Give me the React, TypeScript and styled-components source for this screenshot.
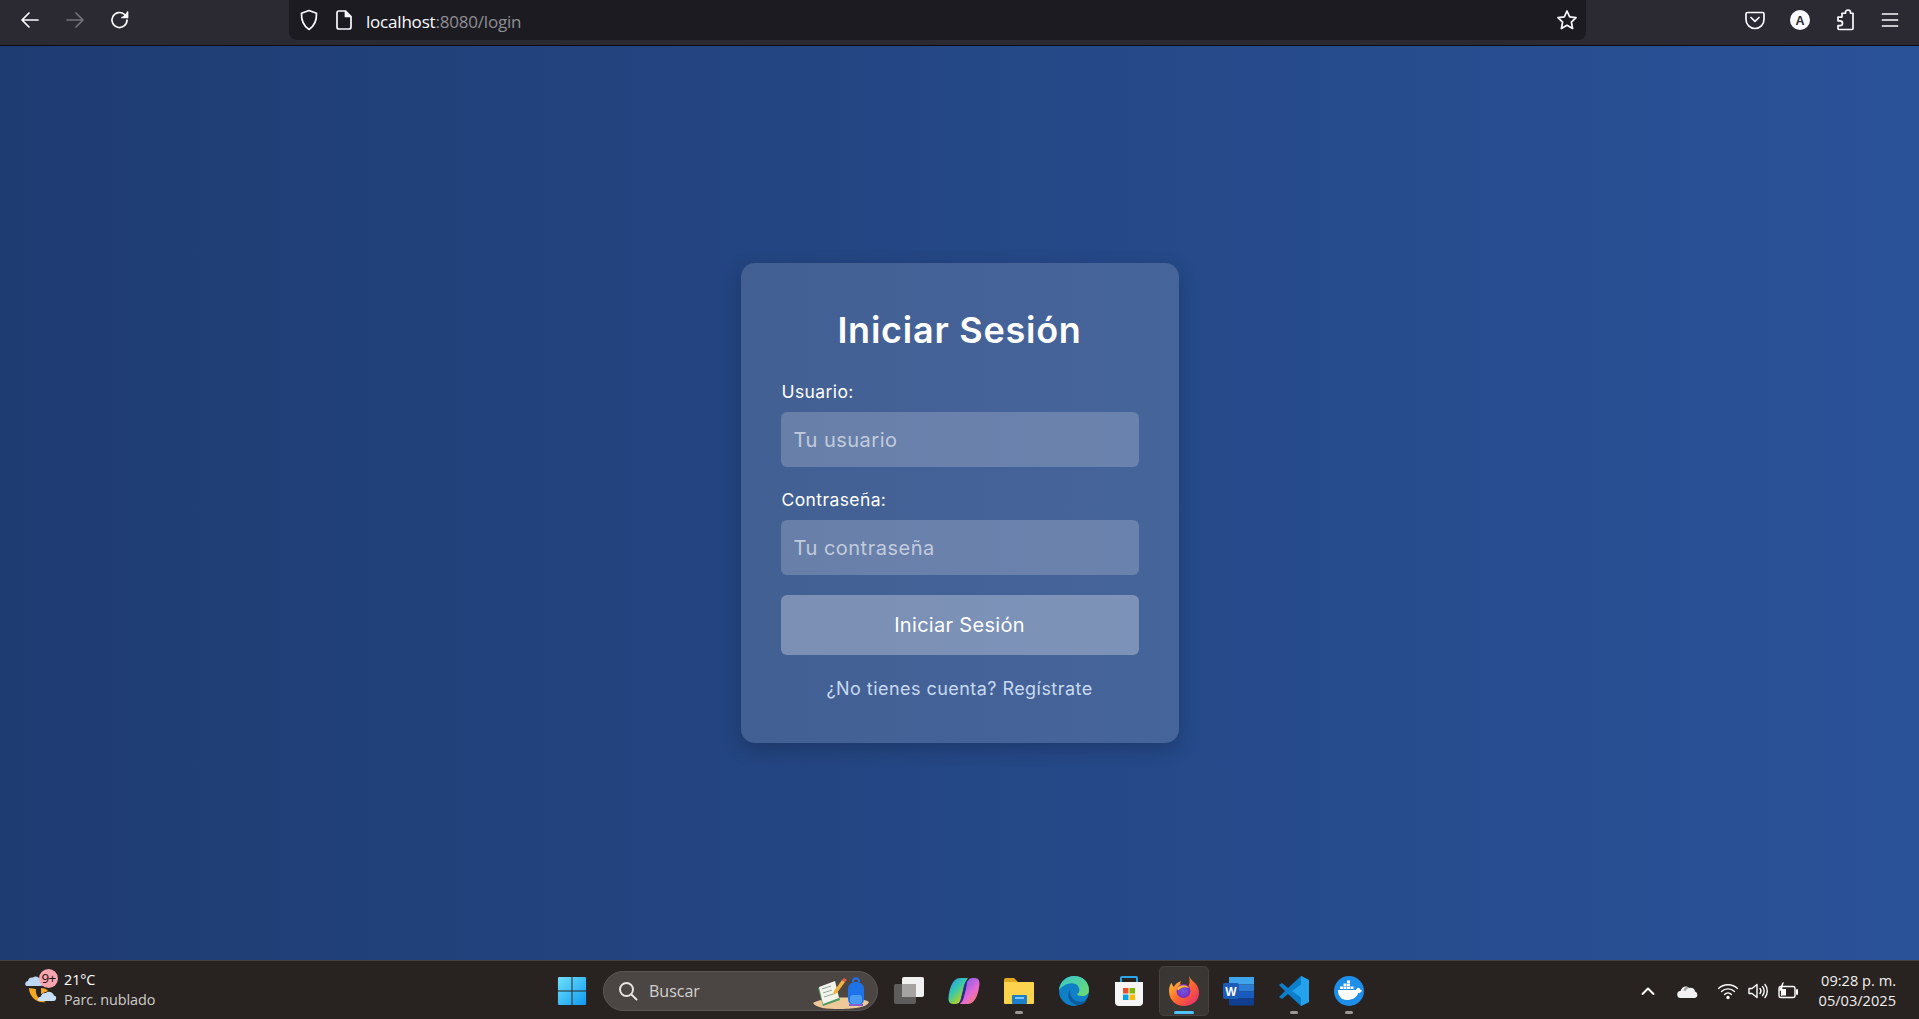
import { createGlobalStyle, styled } from "styled-components";

const GlobalStyle = createGlobalStyle`
  html, body { margin: 0; padding: 0; height: 100%; overflow: hidden; }
  #root { height: 100%; }
  * { box-sizing: border-box; }
`;

const uiFont = `"Open Sans", "Noto Sans", "Liberation Sans", sans-serif`;
const formFont = `Inter, "Noto Sans", "Liberation Sans", sans-serif`;

const Screen = styled.div`
  height: 1019px;
  display: flex;
  flex-direction: column;
`;

/* browser chrome */
const Toolbar = styled.header`
  height: 46px;
  flex: none;
  display: flex;
  align-items: flex-start;
  background: #2b2a33;
  border-bottom: 1px solid #0c0c0f;
  color: #fbfbfe;
`;

const NavGroup = styled.div`
  width: 289px;
  flex: none;
  display: flex;
  padding: 9px 0 0 19px;
  gap: 23px;
`;

const ToolIcon = styled.svg<{ $dim?: boolean }>`
  width: 22px;
  height: 22px;
  flex: none;
  fill: none;
  stroke: ${(p) => (p.$dim ? "#74737b" : "#fbfbfe")};
  stroke-width: 1.7;
  stroke-linecap: round;
  stroke-linejoin: round;
`;

const UrlBar = styled.div`
  width: 1297px;
  height: 40px;
  flex: none;
  display: flex;
  align-items: center;
  padding: 0 8px 0 9px;
  background: #1c1b22;
  border-radius: 0 0 8px 8px;
`;

const UrlGap = styled.span`
  width: 13px;
  flex: none;
`;

const UrlText = styled.div`
  flex: 1;
  margin-left: 11px;
  font: 17px ${uiFont};
  letter-spacing: -0.2px;
  color: #fbfbfe;
  padding-top: 2px;
`;

const UrlMuted = styled.span`
  color: #8f8f93;
`;

const ToolActions = styled.div`
  flex: 1;
  display: flex;
  padding: 9px 18px 0 0;
  justify-content: flex-end;
  gap: 23px;
`;

/* login page */
const Page = styled.main`
  flex: 1;
  display: flex;
  align-items: center;
  justify-content: center;
  background: linear-gradient(90deg, #1e3c72, #2a5298);
`;

const Card = styled.form`
  width: 438px;
  height: 480px;
  padding: 40px;
  display: flex;
  flex-direction: column;
  background: rgba(255, 255, 255, 0.15);
  border-radius: 14px;
  box-shadow: 0 6px 20px rgba(0, 0, 0, 0.2);
  font-family: ${formFont};
  color: #fff;
`;

const Title = styled.h1`
  margin: 0 0 24px;
  height: 52px;
  line-height: 55px;
  text-align: center;
  font-size: 36px;
  font-weight: 600;
  letter-spacing: 0.75px;
`;

const Label = styled.label`
  display: block;
  height: 33px;
  padding-left: 1px;
  line-height: 26px;
  font-size: 17.5px;
  letter-spacing: 0.4px;
`;

const TextInput = styled.input`
  display: block;
  width: 100%;
  height: 55px;
  margin-bottom: 20px;
  padding: 0 13px;
  border: none;
  border-radius: 6px;
  outline: none;
  background: rgba(255, 255, 255, 0.2);
  color: #fff;
  font: 20px ${formFont};
  letter-spacing: 0.5px;
  &::placeholder { color: rgba(255, 255, 255, 0.6); opacity: 1; }
`;

const Submit = styled.button`
  width: 100%;
  height: 60px;
  flex: none;
  border: none;
  border-radius: 6px;
  background: rgba(255, 255, 255, 0.3);
  color: #fff;
  font: 400 20px ${formFont};
  letter-spacing: 0.3px;
`;

const Footer = styled.p`
  margin: 21px 0 0;
  text-align: center;
  font-size: 18px;
  line-height: 26px;
  letter-spacing: 0.45px;
  color: #c7daf2;
`;

/* windows taskbar */
const Taskbar = styled.footer`
  height: 59px;
  flex: none;
  display: flex;
  align-items: center;
  padding-top: 1px;
  background: #282321;
  border-top: 1px solid #46423f;
  color: #fff;
  font-family: ${uiFont};
`;

const Weather = styled.div`
  width: 547px;
  flex: none;
  display: flex;
  align-items: center;
  padding-left: 25px;
  gap: 6px;
`;

const WeatherArt = styled.div`
  position: relative;
  width: 33px;
  height: 36px;
  flex: none;
`;

const Badge = styled.span`
  position: absolute;
  left: 14px;
  top: -4px;
  width: 19px;
  height: 19px;
  border-radius: 50%;
  background: #f8a5b0;
  color: #1b1010;
  font-size: 13.5px;
  line-height: 19px;
  text-align: center;
  letter-spacing: -0.8px;
`;

const WeatherText = styled.div`
  margin-top: -2px;
  font-size: 14.4px;
  line-height: 20px;
  letter-spacing: -0.1px;
`;

const WeatherSub = styled.div`
  color: #cfccca;
`;

const AppStrip = styled.div`
  display: flex;
  align-items: center;
  gap: 5px;
`;

const AppSlot = styled.div<{ $active?: boolean }>`
  position: relative;
  width: 50px;
  height: 50px;
  flex: none;
  display: flex;
  align-items: center;
  justify-content: center;
  border-radius: 5px;
  background: ${(p) => (p.$active ? "#3a3634" : "transparent")};
  border: 1px solid ${(p) => (p.$active ? "#444140" : "transparent")};
`;

const RunDot = styled.span<{ $active?: boolean }>`
  position: absolute;
  left: 50%;
  bottom: 1px;
  transform: translateX(-50%);
  width: ${(p) => (p.$active ? "20px" : "8px")};
  height: 3px;
  border-radius: 2px;
  background: ${(p) => (p.$active ? "#4fc3f7" : "#9c9897")};
`;

const SearchBox = styled.div`
  position: relative;
  width: 275px;
  height: 40px;
  flex: none;
  margin: 0 1px;
  display: flex;
  align-items: center;
  padding-left: 14px;
  gap: 11px;
  background: #4b4644;
  border: 1px solid #5c5856;
  border-radius: 20px;
  font-size: 16px;
  color: #d4d1cf;
`;

const SearchArt = styled.svg`
  position: absolute;
  right: 7px;
  top: 4px;
  width: 58px;
  height: 34px;
`;

const Tray = styled.div`
  flex: 1;
  display: flex;
  align-items: center;
  justify-content: flex-end;
  padding-right: 23px;
`;

const TrayIcons = styled.div`
  display: flex;
  align-items: center;
  gap: 10px;
  margin-right: 20px;
`;

const Clock = styled.div`
  margin-top: -2px;
  text-align: right;
  font-size: 14.6px;
  line-height: 20px;
  color: #f2f0ef;
`;

const AppIcon = styled.svg`
  width: 32px;
  height: 32px;
  display: block;
`;

const TrayIcon = styled.svg`
  width: 22px;
  height: 22px;
  flex: none;
  fill: none;
  stroke: #fff;
  stroke-width: 1.4;
  stroke-linecap: round;
  stroke-linejoin: round;
`;

const Back = () => (
  <ToolIcon viewBox="0 0 22 22">
    <path d="M19 11H3.500M10 4l-7 7 7 7" />
  </ToolIcon>
);

const Forward = () => (
  <ToolIcon viewBox="0 0 22 22" $dim>
    <path d="M3 11h15.500M12 4l7 7-7 7" />
  </ToolIcon>
);

const Reload = () => (
  <ToolIcon viewBox="0 0 22 22">
    <path d="M18 11a7.500 7.500 0 1 1-2.400-5.500L18 8" />
    <path d="M18.500 3v5.500H13" fill="#fbfbfe" />
  </ToolIcon>
);

const Shield = () => (
  <ToolIcon viewBox="0 0 22 22">
    <path d="M11 1.500l7.500 2.800c.3 7.700-2 12.700-7.500 16.200-5.500-3.500-7.800-8.500-7.500-16.200z" />
  </ToolIcon>
);

const PageGlyph = () => (
  <ToolIcon viewBox="0 0 22 22">
    <path d="M6 2h6.500L18 7.500V18a2 2 0 0 1-2 2H6a2 2 0 0 1-2-2V4a2 2 0 0 1 2-2z" />
    <path d="M12.500 2.500v5h5" fill="#fbfbfe" />
  </ToolIcon>
);

const Star = () => (
  <ToolIcon viewBox="0 0 22 22">
    <path d="M11 2l2.700 5.900 6.300.8-4.600 4.400 1.200 6.400L11 16.300l-5.600 3.200 1.200-6.400L2 8.700l6.300-.8z" />
  </ToolIcon>
);

const Pocket = () => (
  <ToolIcon viewBox="0 0 22 22">
    <path d="M3.500 3.500h15A1.500 1.500 0 0 1 20 5v5.500a9 9 0 0 1-18 0V5a1.500 1.500 0 0 1 1.500-1.500z" />
    <path d="M7 8.500l4 3.800 4-3.800" />
  </ToolIcon>
);

const Avatar = () => (
  <ToolIcon viewBox="0 0 22 22" style={{ stroke: "none" }}>
    <circle cx="11" cy="11" r="10" fill="#fbfbfe" />
    <text x="11" y="15.500" textAnchor="middle" fontSize="12.500" fontWeight="700" fontFamily="Liberation Sans, sans-serif" fill="#2b2a33">A</text>
  </ToolIcon>
);

const Puzzle = () => (
  <ToolIcon viewBox="0 0 22 22">
    <path d="M8 4h3.500V3a2.500 2.500 0 0 1 5 0v1H19v16a1 1 0 0 1-1 1H5a1 1 0 0 1-1-1v-3h2a2.500 2.500 0 0 0 0-5H4V8h4z" transform="translate(0 .5) scale(1 .95)" />
  </ToolIcon>
);

const Menu = () => (
  <ToolIcon viewBox="0 0 22 22">
    <path d="M3.500 5h15M3.500 11h15M3.500 17h15" />
  </ToolIcon>
);

const WeatherIcon = () => (
  <svg viewBox="0 0 33 36" width="33" height="36">
    <path d="M4 15c0 9 9 16 17 14-7-2-11-7-10-13z" fill="#f5a623" />
    <path d="M16 15c3 0 6 1 7 3l-7 3z" fill="#f5a623" />
    <path d="M2 13h13a2.800 2.800 0 0 0 1-5.500C15 4 10 2 8 4.500 5 4 3 6 3 8c-3 0-4 5-1 5z" fill="#bcd8f5" />
    <path d="M14 28h14a2.800 2.800 0 0 0 1-5.500c-1-3.500-6-5-8-2.500-3-.5-5 1.500-5 3.500-3 0-4 4.500-2 4.500z" fill="#c8dff7" />
  </svg>
);

const WindowsLogo = () => (
  <AppIcon viewBox="0 0 32 32" style={{ width: 30, height: 30 }}>
    <defs>
      <linearGradient id="winA" x1="0" y1="0" x2="1" y2="1">
        <stop offset="0" stopColor="#6fe0fb" />
        <stop offset="1" stopColor="#0f9bf0" />
      </linearGradient>
    </defs>
    <path d="M1 2.500A1.500 1.500 0 0 1 2.500 1h13v14.500H1zM16.500 1h13A1.500 1.500 0 0 1 31 2.500v13H16.500zM1 16.500h14.500V31h-13A1.500 1.500 0 0 1 1 29.500zM16.500 16.500H31v13a1.500 1.500 0 0 1-1.500 1.500h-13z" fill="url(#winA)" />
  </AppIcon>
);

const SearchGlass = () => (
  <svg viewBox="0 0 20 20" width="20" height="20" fill="none" stroke="#e6e3e1" strokeWidth="2" strokeLinecap="round">
    <circle cx="8.500" cy="8.500" r="6.500" />
    <path d="M13.500 13.500L18.500 18.500" />
  </svg>
);

const SchoolArt = () => (
  <SearchArt viewBox="0 0 58 34">
    <path d="M1 27c10-6 44-8 56-1-2 6-18 7-30 7S4 32 1 27z" fill="#eec99a" />
    <path d="M6 12l17-6 5 18-17 6z" fill="#4f9a5e" />
    <path d="M7 11l16-6 4 17-16 6z" fill="#f3f3ea" />
    <path d="M10 13l9-3M11 17l9-3M12 21l9-3" stroke="#8da6a0" strokeWidth="1" />
    <path d="M22 15l8-11 3 2-8 11-4 2z" fill="#f3b13c" />
    <path d="M30 4l2-2 3 2-2 2z" fill="#ea5a4a" />
    <rect x="36" y="6" width="16" height="24" rx="7" fill="#1f73e8" />
    <path d="M41 6c0-5 6-5 6 0" stroke="#1f73e8" strokeWidth="2" fill="none" />
    <rect x="38" y="19" width="12" height="9" rx="3" fill="#4a9bf2" />
    <path d="M37 29h14" stroke="#8a5fd0" strokeWidth="2" />
  </SearchArt>
);

const TaskView = () => (
  <AppIcon viewBox="0 0 32 32">
    <rect x="1" y="9" width="22" height="20" rx="2" fill="#5f5d5c" />
    <rect x="9" y="2" width="22" height="20" rx="2" fill="#f1f1f1" />
    <rect x="9" y="9" width="14" height="13" fill="#a5a4a3" />
  </AppIcon>
);

const Copilot = () => (
  <AppIcon viewBox="0 0 32 32">
    <defs>
      <linearGradient id="copA" x1="0" y1="0" x2=".8" y2="1">
        <stop offset="0" stopColor="#2a8ff0" />
        <stop offset=".45" stopColor="#35c9b0" />
        <stop offset=".75" stopColor="#9ad03c" />
        <stop offset="1" stopColor="#f7c52e" />
      </linearGradient>
      <linearGradient id="copB" x1=".2" y1="0" x2="1" y2="1">
        <stop offset="0" stopColor="#7a5cf2" />
        <stop offset=".55" stopColor="#e76ad2" />
        <stop offset="1" stopColor="#f8863c" />
      </linearGradient>
    </defs>
    <path d="M12 3h8c-1.500 2-3 5-4 9l-2.500 11c-.6 3-2.500 6-6 6H5C1.500 29 0 26 .6 22 1.500 15 4 3 12 3z" fill="url(#copA)" />
    <path d="M20 29h-8c1.500-2 3-5 4-9l2.500-11c.6-3 2.500-6 6-6H27c3.500 0 5 3 4.400 7C30.500 17 28 29 20 29z" fill="url(#copB)" />
    <path d="M19 5c-2 2-3 5-3.500 8L13 23c-.3 2-1 3.500-2 5 2 0 3-1 4-3l3-11c.5-3 1-6 1-9z" fill="#2c2a8c" />
  </AppIcon>
);

const Explorer = () => (
  <AppIcon viewBox="0 0 32 32">
    <path d="M1 5a2 2 0 0 1 2-2h8l4 4h-14z" fill="#e2a81f" />
    <path d="M1 7h29a1 1 0 0 1 1 1v20a1 1 0 0 1-1 1H2a1 1 0 0 1-1-1z" fill="#fcd34d" />
    <rect x="9" y="20" width="15" height="9" rx="1" fill="#1c7fc9" />
    <rect x="12" y="22" width="9" height="2" fill="#7cc8f2" />
  </AppIcon>
);

const Edge = () => (
  <AppIcon viewBox="0 0 32 32">
    <defs>
      <linearGradient id="edgeA" x1="0" y1="0" x2="1" y2="1">
        <stop offset="0" stopColor="#37c6d0" />
        <stop offset="1" stopColor="#6fdc6a" />
      </linearGradient>
    </defs>
    <circle cx="16" cy="16" r="15" fill="#0f7fc7" />
    <path d="M1 15C2 6 9 1 16 1c9 0 15 6 15 14 0 4-3 6-7 6-3 0-5-1-5-2 3-1 3-5 1-8C17 7 8 7 1 15z" fill="url(#edgeA)" />
    <path d="M12 15c-4 5-1 14 8 15 4 0 7-2 9-5-5 3-12 2-15-2-2-3-2-6-2-8z" fill="#0b5c9e" />
  </AppIcon>
);

const Store = () => (
  <AppIcon viewBox="0 0 32 32">
    <path d="M8 8V3a1 1 0 0 1 1-1h14a1 1 0 0 1 1 1v5" fill="none" stroke="#2aa7e6" strokeWidth="2" />
    <path d="M2 7h28v20a4 4 0 0 1-4 4H6a4 4 0 0 1-4-4z" fill="#f6f6f6" />
    <rect x="10" y="13" width="5.500" height="5.500" fill="#e8502a" />
    <rect x="16.500" y="13" width="5.500" height="5.500" fill="#7fba00" />
    <rect x="10" y="19.500" width="5.500" height="5.500" fill="#00a4ef" />
    <rect x="16.500" y="19.500" width="5.500" height="5.500" fill="#ffb900" />
  </AppIcon>
);

const Firefox = () => (
  <AppIcon viewBox="0 0 32 32">
    <defs>
      <linearGradient id="foxA" x1="0" y1="0" x2="1" y2="1">
        <stop offset="0" stopColor="#ffd23a" />
        <stop offset=".5" stopColor="#ff6a2a" />
        <stop offset="1" stopColor="#e3237a" />
      </linearGradient>
      <radialGradient id="foxB">
        <stop offset="0" stopColor="#6a5be0" />
        <stop offset="1" stopColor="#7b2cbf" />
      </radialGradient>
    </defs>
    <path d="M21 1c1 3 4 5 7 8 3 4 3 8 3 9 0 8-7 13-15 13S1 25 1 16c0-4 1-7 3-8 0 2 1 3 2 4 1-3 4-5 7-6-1 2-1 3 0 4 3 0 6 0 7 2 2-3 2-7 1-11z" fill="url(#foxA)" />
    <circle cx="15.500" cy="16" r="7" fill="url(#foxB)" />
    <path d="M9 13c3-3 9-4 12 0-3-1-7-1-9 1-2 1-2 3-3-1z" fill="#ffb52e" />
  </AppIcon>
);

const Word = () => (
  <AppIcon viewBox="0 0 32 32">
    <rect x="6" y="2" width="25" height="7.500" fill="#41a5ee" />
    <rect x="6" y="9.500" width="25" height="7" fill="#2b7cd3" />
    <rect x="6" y="16.500" width="25" height="7" fill="#185abd" />
    <rect x="6" y="23.500" width="25" height="7" rx="1" fill="#103f91" />
    <rect x="0" y="8" width="16" height="16" rx="2" fill="#1a5cb8" />
    <text x="8" y="20.500" textAnchor="middle" fontSize="12" fontWeight="700" fontFamily="Liberation Sans, sans-serif" fill="#fff">W</text>
  </AppIcon>
);

const VsCode = () => (
  <AppIcon viewBox="0 0 32 32">
    <path d="M23 1l8 4v22l-8 4-13-12-6 5-3-2 6-6-6-6 3-2 6 5z" fill="#0b7fcc" />
    <path d="M23 1l8 4v22l-8 4zM23 9.500L14 16l9 6.500z" fill="#24a2ec" fillRule="evenodd" />
  </AppIcon>
);

const Docker = () => (
  <AppIcon viewBox="0 0 32 32">
    <circle cx="16" cy="16" r="15" fill="#1d8fe8" />
    <path d="M5 15h18c.5-1.500 2-2.500 3-2 1 .5 1.500 1.500 1.500 2 1 0 1.500.5 1.500.5-1 2-2.500 2.500-3.500 2.500C23 23 19 25 14 25c-6 0-9-4-9-10z" fill="#fff" />
    <path d="M7 11.500h3V14H7zM10.500 11.500h3V14h-3zM14 11.500h3V14h-3zM10.500 8.500h3V11h-3zM14 8.500h3V11h-3zM14 5.500h3V8h-3zM17.500 11.500h3V14h-3z" fill="#fff" />
  </AppIcon>
);

const Chevron = () => (
  <TrayIcon viewBox="0 0 22 22" style={{ strokeWidth: 2 }}>
    <path d="M5.500 14L11 8.500 16.500 14" />
  </TrayIcon>
);

const OneDrive = () => (
  <TrayIcon viewBox="0 0 22 22" style={{ stroke: "none", margin: "0 8px" }}>
    <path d="M4 18a3.500 3.500 0 0 1-.5-7C4.500 7 9 5 12 8c3-1 6 1 6 3.500 3 .5 3.500 6.500-.5 6.500z" fill="#f2f2f2" />
    <path d="M6.500 10.500C7.500 7 10 6.200 12 8c-2 .5-3 1.500-3.500 3z" fill="#9d9d9d" />
  </TrayIcon>
);

const Wifi = () => (
  <TrayIcon viewBox="0 0 22 22">
    <path d="M1.500 8.500c5-5 14-5 19 0M4.500 11.500c3.500-3.500 9.500-3.500 13 0M7.500 14.500c2-2 5-2 7 0" />
    <circle cx="11" cy="17.500" r="1" fill="#fff" />
  </TrayIcon>
);

const Speaker = () => (
  <TrayIcon viewBox="0 0 22 22" style={{ marginLeft: -2 }}>
    <path d="M2 8.500v5h3l5 4v-13l-5 4zM13 8.500c1.200 1.500 1.200 3.500 0 5M15.500 6.500c2.200 2.500 2.200 6.500 0 9M18 4.500c3 3.500 3 9.500 0 13" />
  </TrayIcon>
);

const Battery = () => (
  <TrayIcon viewBox="0 0 22 22" style={{ marginLeft: -2 }}>
    <rect x="2" y="6.500" width="16" height="11" rx="2" />
    <path d="M20 10v4" strokeWidth="2" />
    <path d="M6 3L3 10h3l-1.500 5" stroke="#fff" fill="#fff" />
    <rect x="4" y="9" width="5" height="6.500" fill="#fff" stroke="none" />
  </TrayIcon>
);

const apps = [
  { id: "taskview", icon: <TaskView /> },
  { id: "copilot", icon: <Copilot /> },
  { id: "explorer", icon: <Explorer />, running: true },
  { id: "edge", icon: <Edge /> },
  { id: "store", icon: <Store /> },
  { id: "firefox", icon: <Firefox />, active: true },
  { id: "word", icon: <Word /> },
  { id: "vscode", icon: <VsCode />, running: true },
  { id: "docker", icon: <Docker />, running: true },
];

export default function App() {
  return (
    <>
      <GlobalStyle />
      <Screen>
        <Toolbar>
          <NavGroup>
            <Back />
            <Forward />
            <Reload />
          </NavGroup>
          <UrlBar>
            <Shield />
            <UrlGap />
            <PageGlyph />
            <UrlText>
              localhost<UrlMuted>:8080/login</UrlMuted>
            </UrlText>
            <Star />
          </UrlBar>
          <ToolActions>
            <Pocket />
            <Avatar />
            <Puzzle />
            <Menu />
          </ToolActions>
        </Toolbar>

        <Page>
          <Card onSubmit={(e) => e.preventDefault()}>
            <Title>Iniciar Sesión</Title>
            <Label htmlFor="usuario">Usuario:</Label>
            <TextInput id="usuario" placeholder="Tu usuario" />
            <Label htmlFor="clave">Contraseña:</Label>
            <TextInput id="clave" type="password" placeholder="Tu contraseña" />
            <Submit type="submit">Iniciar Sesión</Submit>
            <Footer>¿No tienes cuenta? Regístrate</Footer>
          </Card>
        </Page>

        <Taskbar>
          <Weather>
            <WeatherArt>
              <WeatherIcon />
              <Badge>9+</Badge>
            </WeatherArt>
            <WeatherText>
              21°C
              <WeatherSub>Parc. nublado</WeatherSub>
            </WeatherText>
          </Weather>
          <AppStrip>
            <AppSlot>
              <WindowsLogo />
            </AppSlot>
            <SearchBox>
              <SearchGlass />
              Buscar
              <SchoolArt />
            </SearchBox>
            {apps.map((app) => (
              <AppSlot key={app.id} $active={app.active}>
                {app.icon}
                {(app.running || app.active) && <RunDot $active={app.active} />}
              </AppSlot>
            ))}
          </AppStrip>
          <Tray>
            <TrayIcons>
              <Chevron />
              <OneDrive />
              <Wifi />
              <Speaker />
              <Battery />
            </TrayIcons>
            <Clock>
              09:28 p. m.
              <br />
              05/03/2025
            </Clock>
          </Tray>
        </Taskbar>
      </Screen>
    </>
  );
}
